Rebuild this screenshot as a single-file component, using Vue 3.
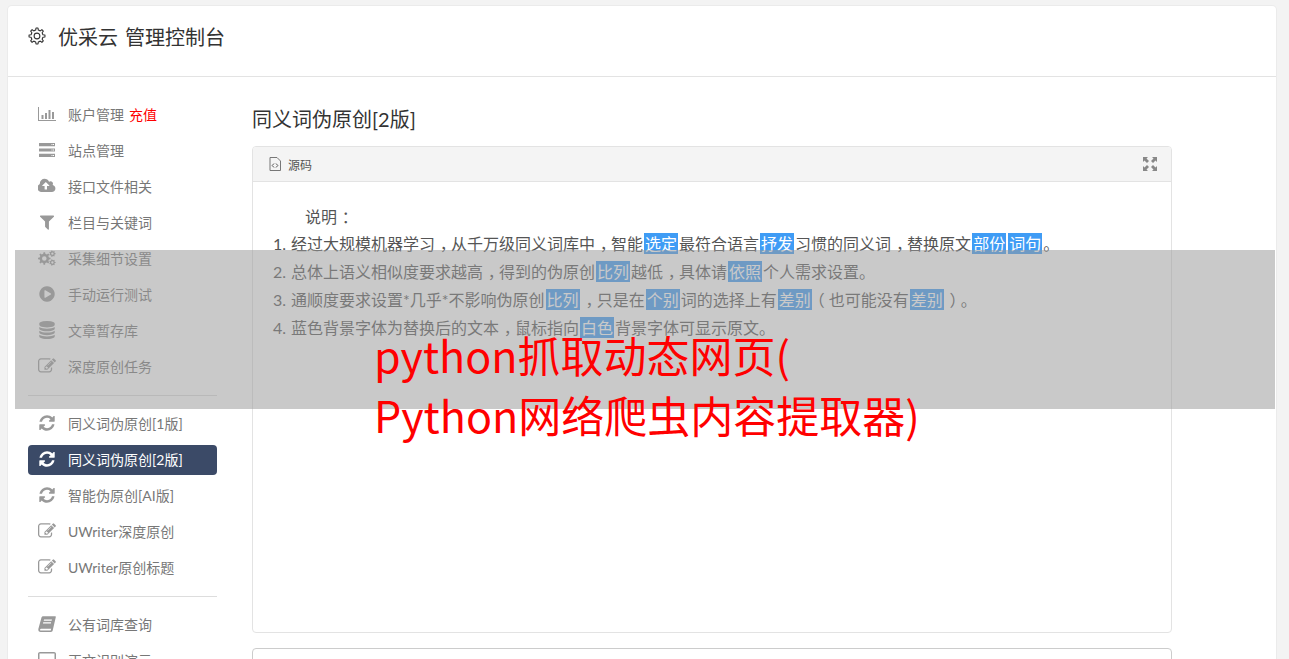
<script setup>
function gear(cx, cy, r, teeth) {
  const out = r * 1.0
  const inner = r * 0.76
  const hole = r * 0.36
  const pts = []
  const step = (Math.PI * 2) / teeth
  for (let i = 0; i < teeth; i++) {
    const a = i * step
    const w = step * 0.2
    pts.push([a - w * 1.4, inner], [a - w * 0.8, out], [a + w * 0.8, out], [a + w * 1.4, inner])
  }
  const body = pts
    .map(([a, d], i) => `${i ? 'L' : 'M'}${(cx + Math.cos(a) * d).toFixed(2)} ${(cy + Math.sin(a) * d).toFixed(2)}`)
    .join('')
  return `${body}ZM${cx - hole} ${cy}a${hole} ${hole} 0 1 0 ${hole * 2} 0a${hole} ${hole} 0 1 0 ${-hole * 2} 0Z`
}

const refresh = { vb: '0 0 1792 1792', d: 'M1639 1056q0 5-1 7-64 268-268 434.5t-478 166.5q-146 0-282.5-55t-243.5-157l-129 129q-19 19-45 19t-45-19-19-45v-448q0-26 19-45t45-19h448q26 0 45 19t19 45-19 45l-137 137q71 66 161 102t187 36q134 0 250-65t186-179q11-17 53-117 8-23 30-23h192q13 0 22.5 9.5t9.5 22.5zm25-800v448q0 26-19 45t-45 19h-448q-26 0-45-19t-19-45 19-45l138-138q-148-137-349-137-134 0-250 65t-186 179q-11 17-53 117-8 23-30 23h-199q-13 0-22.5-9.5t-9.5-22.5v-7q65-268 270-434.5t480-166.5q146 0 284 55.5t245 156.5l130-129q19-19 45-19t45 19 19 45z' }
const edit = { vb: '0 0 1792 1792', d: 'M888 1184l116-116-152-152-116 116v56h96v96h56zm440-720q-16-16-33 1l-350 350q-17 17-1 33t33-1l350-350q17-17 1-33zm80 594v190q0 119-84.5 203.5t-203.5 84.5h-832q-119 0-203.5-84.5t-84.5-203.5v-832q0-119 84.5-203.5t203.5-84.5h832q63 0 117 25 15 7 18 23 3 17-9 29l-49 49q-14 14-32 8-23-6-45-6h-832q-66 0-113 47t-47 113v832q0 66 47 113t113 47h832q66 0 113-47t47-113v-126q0-13 9-22l64-64q15-15 35-7t20 29zm-96-738l288 288-672 672h-288v-288zm444 132l-92 92-288-288 92-92q28-28 68-28t68 28l152 152q28 28 28 68t-28 68z' }
const chart = { vb: '0 0 18 16', d: 'M0 1h1v13h17v1H0zM3.500 9h2v4h-2zM7 7h2v6H7zM10.500 4h2v9h-2zM14 6h2v7h-2z' }
const server = { vb: '0 0 18 16', d: 'M1 1h16v3.200H1zM13.500 2v1h1V2zM15 2v1h1V2zM1 6.400h16v3.200H1zM13.500 7.500v1h1v-1zM15 7.500v1h1v-1zM1 11.800h16V15H1zM13.500 13v1h1v-1zM15 13v1h1v-1z' }
const cloud = { vb: '0 0 1920 1792', d: 'M1216 864q0-14-9-23l-352-352q-9-9-23-9t-23 9l-351 351q-10 12-10 24 0 14 9 23t23 9h224v352q0 13 9.5 22.5t22.5 9.5h192q13 0 22.5-9.5t9.5-22.5v-352h224q13 0 22.5-9.5t9.5-22.5zm640 288q0 159-112.5 271.5t-271.5 112.5h-1088q-185 0-316.5-131.5t-131.5-316.5q0-130 70-240t188-165q-2-30-2-43 0-212 150-362t362-150q156 0 285.5 87t188.5 231q71-62 166-62 106 0 181 75t75 181q0 76-41 138 130 31 213.5 135.5t83.5 238.5z' }
const filter = { vb: '0 0 1408 1792', d: 'M1403 295q17 41-14 70l-493 493v742q0 42-39 59-13 5-25 5-27 0-45-19l-256-256q-19-19-19-45v-486l-493-493q-31-29-14-70 17-39 59-39h1280q42 0 59 39z' }
const cogs = { vb: '0 0 20 18', d: gear(7, 9.5, 7, 8) + gear(16, 4.2, 3.6, 7) + gear(16, 14, 3.6, 7) }
const play = { vb: '0 0 1536 1792', d: 'M768 128q209 0 385.5 103t279.5 279.5 103 385.5-103 385.5-279.5 279.5-385.5 103-385.5-103-279.5-279.5-103-385.5 103-385.5 279.5-279.5 385.5-103zm384 823q32-18 32-55t-32-55l-544-320q-31-19-64-1-32 19-32 56v640q0 37 32 56 16 8 32 8 17 0 32-9z' }
const database = { vb: '0 0 1536 1792', d: 'M768 768q237 0 443-43t325-127v170q0 69-103 128t-280 93.5-385 34.5-385-34.5-280-93.5-103-128v-170q119 84 325 127t443 43zm0 768q237 0 443-43t325-127v170q0 69-103 128t-280 93.5-385 34.5-385-34.5-280-93.5-103-128v-170q119 84 325 127t443 43zm0-384q237 0 443-43t325-127v170q0 69-103 128t-280 93.5-385 34.5-385-34.5-280-93.5-103-128v-170q119 84 325 127t443 43zm0-1152q208 0 385 34.5t280 93.5 103 128v128q0 69-103 128t-280 93.5-385 34.5-385-34.5-280-93.5-103-128v-128q0-69 103-128t280-93.5 385-34.5z' }
const book = { vb: '0 0 16 16', d: 'M4.500 1H15.200c.5 0 .7.4.6.9L13 14c-.2.7-.8 1-1.400 1H2.400C1 15 0 14 .3 12.400L3.100 2.200C3.300 1.500 3.800 1 4.500 1zM5.400 4l-.3 1h7l.3-1zM4.700 6.500l-.3 1h7l.3-1zM2.700 12.300c-.4 0-.8.3-.9.7-.1.4.2.7.6.7h8.900l.4-1.400z' }
const desktop = { vb: '0 0 18 16', d: 'M2 0h14c1.100 0 2 .9 2 2v9c0 1.100-.9 2-2 2H2c-1.100 0-2-.9-2-2V2C0 .9.900 0 2 0zM1.500 1.500v8.500h15V1.500z' }

const groups = [
  [
    { icon: chart, text: '账户管理', tag: '充值' },
    { icon: server, text: '站点管理' },
    { icon: cloud, text: '接口文件相关' },
    { icon: filter, text: '栏目与关键词' },
    { icon: cogs, text: '采集细节设置' },
    { icon: play, text: '手动运行测试' },
    { icon: database, text: '文章暂存库' },
    { icon: edit, text: '深度原创任务' }
  ],
  [
    { icon: refresh, text: '同义词伪原创[1版]' },
    { icon: refresh, text: '同义词伪原创[2版]', active: true },
    { icon: refresh, text: '智能伪原创[AI版]' },
    { icon: edit, text: 'UWriter深度原创' },
    { icon: edit, text: 'UWriter原创标题' }
  ],
  [
    { icon: book, text: '公有词库查询' },
    { icon: desktop, text: '正文识别演示' }
  ]
]

const lines = [
  ['经过大规模机器学习，从千万级同义词库中，智能', '选定', '最符合语言', '抒发', '习惯的同义词，替换原文', '部份', '', '词句', '。'],
  ['总体上语义相似度要求越高，得到的伪原创', '比列', '越低，具体请', '依照', '个人需求设置。'],
  ['通顺度要求设置*几乎*不影响伪原创', '比列', '，只是在', '个别', '词的选择上有', '差别', '（也可能没有', '差别', '）。'],
  ['蓝色背景字体为替换后的文本，鼠标指向', '白色', '背景字体可显示原文。']
]
const headerGear = gear(9, 9, 8, 8)

function parts(seg) {
  return seg.split(/([，：（）])/).filter(Boolean).map((t) => ({
    t,
    cls: t === '（' ? 'open' : '，：）'.includes(t) ? 'close' : ''
  }))
}
</script>

<template>
  <div class="card">
    <header class="top">
      <svg class="top-gear" viewBox="0 0 18 18" width="18" height="18">
        <path :d="headerGear" fill="none" stroke="#333" stroke-width="1.100" stroke-linejoin="round" />
      </svg>
      <h1 class="brand">优采云 管理控制台</h1>
    </header>
    <div class="body">
      <aside class="side">
        <template v-for="(group, g) in groups" :key="g">
          <hr v-if="g" class="rule" />
          <a v-for="item in group" :key="item.text" class="item" :class="{ on: item.active }">
            <span class="ico">
              <svg :viewBox="item.icon.vb" width="18" height="18" preserveAspectRatio="xMidYMid meet">
                <path :d="item.icon.d" fill="currentColor" fill-rule="evenodd" />
              </svg>
            </span>
            <span>{{ item.text }}</span>
            <span v-if="item.tag" class="tag">{{ item.tag }}</span>
          </a>
        </template>
      </aside>
      <main class="main">
        <h2 class="title">同义词伪原创[2版]</h2>
        <section class="panel">
          <div class="panel-head">
            <span class="src">
              <svg viewBox="0 0 12 14" width="12" height="14">
                <path d="M1 .5h7l3.500 3.500v9.500H1z" fill="none" stroke="#777" />
                <path d="M5 6.500 3.200 8.500 5 10.500M7 6.500l1.800 2L7 10.500" fill="none" stroke="#555" />
              </svg>
              源码
            </span>
            <svg viewBox="0 0 14 14" width="14" height="14" class="expand">
              <path d="M0 0h5L3.500 1.500 6 4 4 6 1.500 3.500 0 5zM14 0v5L12.500 3.500 10 6 8 4l2.500-2.500L9 0zM0 14V9l1.500 1.500L4 8l2 2-2.500 2.500L5 14zM14 14H9l1.500-1.500L8 10l2-2 2.500 2.500L14 9z" fill="#888" />
            </svg>
          </div>
          <div class="panel-body">
            <p class="lead">说明<span class="pu close">：</span></p>
            <ol class="notes">
              <li v-for="(line, n) in lines" :key="n"><span class="num">{{ n + 1 }}.</span><template v-for="(seg, s) in line" :key="s"><span v-if="s % 2 === 0"><template v-for="(p, i) in parts(seg)" :key="i"><span v-if="p.cls" class="pu" :class="p.cls">{{ p.t }}</span><template v-else>{{ p.t }}</template></template></span><span v-else class="hi">{{ seg }}</span></template></li>
            </ol>
          </div>
        </section>
        <section class="panel next"></section>
      </main>
    </div>
  </div>
  <div class="veil"></div>
  <div class="headline">python抓取动态网页(<br />Python网络爬虫内容提取器)</div>
</template>

<style>
html, body { height: 659px; overflow: hidden; background: #f3f3f3; }
</style>

<style scoped>
.card {
  margin: 6px 13px 0 8px;
  height: 700px;
  background: #fff;
  border-radius: 4px;
  box-shadow: 0 0 0 1px #ebebeb;
  font-family: Lato, "Noto Sans CJK SC", sans-serif;
  color: #555;
  overflow: hidden;
}
.top {
  height: 71px;
  box-sizing: border-box;
  border-bottom: 1px solid #e3e3e3;
  display: flex;
  align-items: flex-start;
  padding: 21px 0 0 20px;
  gap: 12px;
}
.brand { margin: 0; font-size: 20px; font-weight: 400; line-height: 20px; color: #333; word-spacing: 2px; }
.body { display: flex; }
.side { width: 189px; margin: 20px 0 0 20px; display: flex; flex-direction: column; flex: none; }
.item {
  height: 30px;
  box-sizing: border-box;
  padding-bottom: 2px;
  margin: 3px 0;
  border-radius: 4px;
  display: flex;
  align-items: center;
  font-size: 14px;
  color: #777;
}
.item.on { background: #3b4a67; color: #fff; }
.ico { width: 18px; height: 18px; margin: 0 12px 0 10px; color: #999; display: flex; }
.item.on .ico { color: #fff; }
.tag { color: #f00; margin-left: 5px; }
.rule { width: 100%; margin: 10px 0; border: 0; border-top: 1px solid #ddd; height: 0; }
.main { width: 920px; margin-left: 35px; flex: none; }
.title { margin: 27px 0 12px; font-size: 20px; font-weight: 400; line-height: 30px; color: #333; }
.panel { height: 485px; border: 1px solid #e3e3e3; border-radius: 4px; overflow: hidden; }
.next { margin-top: 15px; border-color: #ccc; }
.panel-head {
  height: 34px;
  background: #f4f4f4;
  border-bottom: 1px solid #e3e3e3;
  display: flex;
  justify-content: space-between;
  align-items: center;
  padding: 0 14px 0 16px;
}
.src { display: flex; align-items: center; gap: 7px; font-size: 12px; color: #555; }
.panel-body { padding: 21px 20px 0; font-size: 16px; line-height: 28px; color: #555; }
.lead { margin: 0 0 -1px; text-indent: 32px; }
.notes { margin: 0; padding: 0; list-style: none; }
.num { display: inline-block; width: 18px; }
.pu { display: inline-block; width: 1em; }
.close { text-indent: .3em; }
.open { text-indent: -.25em; }
.hi {
  display: inline-block;
  margin: 0 1px;
  padding: 0 1px;
  line-height: 21px;
  background: #3f9cf5;
  color: #fff;
}
.veil {
  position: absolute;
  left: 15px;
  top: 250px;
  width: 1260px;
  height: 159px;
  background: rgba(153, 153, 153, .53);
}
.headline {
  position: absolute;
  left: 374px;
  top: 324px;
  font-family: "Noto Sans CJK SC", sans-serif;
  font-size: 43px;
  line-height: 60px;
  color: #f00;
  white-space: nowrap;
}
</style>
